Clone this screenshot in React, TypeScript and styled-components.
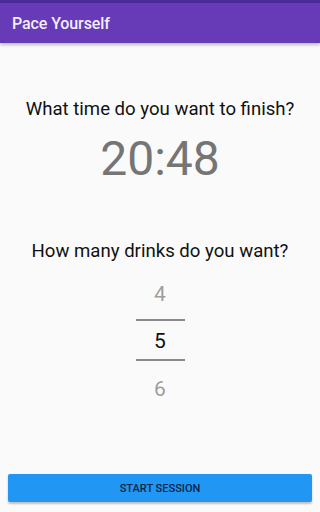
import React from "react";
import styled, { createGlobalStyle } from "styled-components";

const GlobalStyle = createGlobalStyle`
  html, body {
    margin: 0;
    padding: 0;
    background: #fafafa;
    font-family: Roboto, "Liberation Sans", sans-serif;
  }
  #root {
    min-height: 512px;
  }
`;

const App = () => {
  return (
    <>
      <GlobalStyle />
      <Screen>
        <StatusStrip />
        <AppBar>
          <AppTitle>Pace Yourself</AppTitle>
        </AppBar>
        <Content>
          <Question>What time do you want to finish?</Question>
          <TimeText>20:48</TimeText>
          <Question $top={52}>How many drinks do you want?</Question>
          <Picker>
            <PickerValue $pos="above">4</PickerValue>
            <Divider />
            <PickerValue $pos="selected">5</PickerValue>
            <Divider />
            <PickerValue $pos="below">6</PickerValue>
          </Picker>
        </Content>
        <Footer>
          <StartButton>START SESSION</StartButton>
        </Footer>
      </Screen>
    </>
  );
};

export default App;

const Screen = styled.div`
  display: flex;
  flex-direction: column;
  height: 512px;
  background: #fafafa;
`;

const StatusStrip = styled.div`
  height: 3px;
  background: #4a2b9a;
`;

const AppBar = styled.header`
  height: 40px;
  display: flex;
  align-items: center;
  padding: 0 12px;
  background: #673ab7;
  box-shadow: 0 2px 3px rgba(0, 0, 0, 0.25);
  position: relative;
  z-index: 1;
`;

const AppTitle = styled.h1`
  margin: 0;
  color: #f3eefc;
  font-size: 16px;
  font-weight: 500;
  letter-spacing: -0.1px;
`;

const Content = styled.main`
  flex: 1;
  display: flex;
  flex-direction: column;
  align-items: center;
  padding-top: 54px;
`;

const Question = styled.p<{ $top?: number }>`
  margin: ${(p) => p.$top ?? 0}px 0 0;
  color: #111;
  font-size: 18.6px;
  line-height: 24px;
`;

const TimeText = styled.div`
  margin-top: 10px;
  color: #757575;
  font-size: 48px;
  line-height: 56px;
`;

const Picker = styled.div`
  display: flex;
  flex-direction: column;
  align-items: center;
  width: 49px;
  margin-top: 18px;
`;

const pickerPadding = {
  above: "0 0 13px",
  selected: "2px 0 0",
  below: "18px 0 0",
};

const PickerValue = styled.div<{ $pos: "above" | "selected" | "below" }>`
  height: 38px;
  box-sizing: border-box;
  padding: ${(p) => pickerPadding[p.$pos]};
  display: flex;
  align-items: center;
  justify-content: center;
  font-size: 21px;
  color: ${(p) => (p.$pos === "selected" ? "#111" : "#9e9e9e")};
`;

const Divider = styled.div`
  align-self: stretch;
  height: 2px;
  background: #8a8a8a;
`;

const Footer = styled.footer`
  padding: 0 8px 10px;
`;

const StartButton = styled.button`
  display: block;
  width: 100%;
  height: 28px;
  border: none;
  border-radius: 2px;
  background: #2196f3;
  color: #0d2546;
  font-family: Roboto, "Liberation Sans", sans-serif;
  font-size: 11px;
  font-weight: 500;
  box-shadow: 0 2px 2px rgba(0, 0, 0, 0.24);
  cursor: pointer;
`;
